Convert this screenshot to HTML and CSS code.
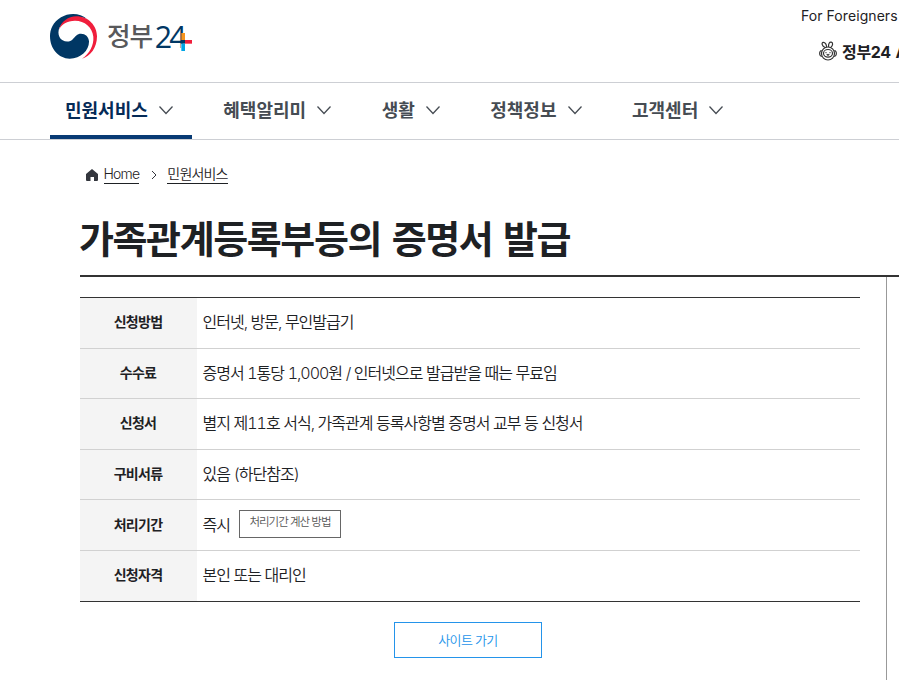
FILE: index.html
```html
<!DOCTYPE html>
<html lang="ko">
<head>
    <meta charset="UTF-8">
    <meta name="viewport" content="width=device-width, initial-scale=1.0">
    <title>가족관계등록부등의 증명서 발급</title>
    <link rel="stylesheet" href="styles.css">
</head>
<body>

    <!-- Header -->
    <header class="header">
        <a class="logo">
            <svg width="144" height="48" viewBox="30 39 432 144">
                <path fill="#003764" d="M140 56C122 39 86 37 63 52C39 67 30 88 30 109C30 146 56 176 89 176C123 176 148 151 147 124C146 110 136 101 123 101C111 101 106 109 99 117C91 126 78 127 68 121C55 113 52 96 59 82C70 60 103 43 140 56Z"/>
                <path fill="#f01e3c" d="M57 89C63 65 85 49 109 49C146 49 171 78 171 109C171 144 151 169 126 176C149 160 162 136 160 110C157 81 134 62 105 62C81 62 65 73 57 89Z"/>
                <text class="logo-ko" x="201" y="139">정부</text>
                <text class="logo-num" x="344" y="144">2</text>
                <text class="logo-num" x="388" y="144">4</text>
                <rect fill="#fff" x="436" y="116" width="20" height="16"/>
                <rect fill="#fff" x="422" y="131" width="16" height="24"/>
                <rect fill="#f7941d" x="424" y="99" width="11" height="21"/>
                <rect fill="#003764" x="424" y="120" width="11" height="11"/>
                <rect fill="#f01e3c" x="435" y="120" width="21" height="11"/>
                <rect fill="#00a5e5" x="424" y="131" width="11" height="22"/>
            </svg>
        </a>
        <div class="util">
            <a class="foreign">For Foreigners</a>
            <a class="app">
                <svg width="20" height="20" viewBox="0 0 20 20" fill="none" stroke="#333" stroke-width="1.2">
                    <circle cx="10" cy="12.5" r="6.5"/>
                    <ellipse cx="10" cy="12.3" rx="4.5" ry="3.8"/>
                    <path d="M7 6.5C3.5 4.5 3.5 1.6 5.2 1.4C7.2 1.2 8.4 3.5 8.6 6M10.6 6C10.2 2.8 11.5 .8 13.3 1.2C15.4 1.8 14.8 4.8 12.8 6.4M3.6 9.5C1 9.5 1 15.5 3.8 15.3M16.4 9.5C19 9.5 19 15.5 16.2 15.3M8.7 13.2L10 14.2L11.3 13.2M7.5 11.6H8.5M11.5 11.6H12.5"/>
                </svg>
                <span>정부24 A</span>
            </a>
        </div>
    </header>

    <!-- Main menu -->
    <nav class="nav">
        <a class="nav-item active">민원서비스<svg class="arrow" viewBox="0 0 20 20"><path d="M3.5 6.5L10 13.5L16.5 6.5"/></svg></a>
        <a class="nav-item">혜택알리미<svg class="arrow" viewBox="0 0 20 20"><path d="M3.5 6.5L10 13.5L16.5 6.5"/></svg></a>
        <a class="nav-item">생활<svg class="arrow" viewBox="0 0 20 20"><path d="M3.5 6.5L10 13.5L16.5 6.5"/></svg></a>
        <a class="nav-item">정책정보<svg class="arrow" viewBox="0 0 20 20"><path d="M3.5 6.5L10 13.5L16.5 6.5"/></svg></a>
        <a class="nav-item">고객센터<svg class="arrow" viewBox="0 0 20 20"><path d="M3.5 6.5L10 13.5L16.5 6.5"/></svg></a>
    </nav>

    <!-- Content -->
    <main class="container">
        <div class="breadcrumb">
            <svg class="house" width="12" height="12" viewBox="0 0 12 12"><path fill="#33363d" d="M6 0L12 5V11Q12 12 11 12H8V8H4.5V12H1Q0 12 0 11V5Z"/></svg>
            <a class="home">Home</a>
            <svg class="sep" width="6" height="8" viewBox="0 0 6 8"><path fill="none" stroke="#33363d" d="M1 0L5 4L1 8"/></svg>
            <a>민원서비스</a>
        </div>

        <h1>가족관계등록부등의 증명서 발급</h1>

        <div class="body">
            <section class="content">
                <table class="info">
                    <tr><th>신청방법</th><td>인터넷, 방문, 무인발급기</td></tr>
                    <tr><th>수수료</th><td>증명서 1통당 1,000원 / 인터넷으로 발급받을 때는 무료임</td></tr>
                    <tr><th>신청서</th><td>별지 제11호 서식, 가족관계 등록사항별 증명서 교부 등 신청서</td></tr>
                    <tr><th>구비서류</th><td>있음 (하단참조)</td></tr>
                    <tr><th>처리기간</th><td><div class="period">즉시<button class="btn-calc">처리기간 계산 방법</button></div></td></tr>
                    <tr><th>신청자격</th><td>본인 또는 대리인</td></tr>
                </table>
                <button class="btn-site">사이트 가기</button>
            </section>
            <aside class="side"></aside>
        </div>
    </main>

</body>
</html>
```
FILE: styles.css
```css
* {
    box-sizing: border-box;
}

body {
    margin: 0;
    height: 680px;
    overflow: hidden;
    background-color: #fff;
    color: #1e2124;
    font-family: Inter, "Noto Sans CJK KR", sans-serif;
    font-size: 16px;
}

button {
    font-family: inherit;
    background-color: #fff;
    padding: 0;
}

/* Header */
.header {
    display: flex;
    height: 83px;
    padding: 13px 0 0 50px;
    border-bottom: 1px solid #cdcfd4;
}

.logo {
    width: 751px;
    flex-shrink: 0;
}

.logo-ko {
    font-family: "Noto Sans CJK KR", sans-serif;
    font-size: 77px;
    font-weight: 500;
    letter-spacing: -3px;
    fill: #58595b;
}

.logo-num {
    font-family: "Open Sans", sans-serif;
    font-size: 91px;
    font-weight: 500;
    fill: #003764;
}

.util {
    width: 98px;
    white-space: nowrap;
}

.foreign {
    display: block;
    margin-top: -7px;
    font-size: 14px;
    line-height: 20px;
    letter-spacing: 0.07px;
}

.app {
    display: flex;
    align-items: center;
    gap: 4px;
    height: 24px;
    margin: 13px 0 0 17px;
    font-weight: 700;
    font-size: 16px;
    letter-spacing: -0.3px;
    word-spacing: 1px;
}

.app svg {
    flex-shrink: 0;
}

/* Main menu */
.nav {
    display: flex;
    gap: 16.5px;
    height: 57px;
    padding-left: 50px;
    border-bottom: 1px solid #cdcfd4;
}

.nav-item {
    display: flex;
    align-items: center;
    gap: 8px;
    padding: 0 16px 1px 15px;
    border-bottom: 4px solid transparent;
    color: #464c53;
    font-size: 18px;
    font-weight: 700;
}

.nav-item.active {
    color: #052b57;
    border-color: #083a74;
}

.arrow {
    width: 20px;
    height: 20px;
    margin-top: 2px;
    fill: none;
    stroke: #464c53;
    stroke-width: 1.3;
}

/* Content */
.container {
    width: 1180px;
    padding-left: 80px;
}

.breadcrumb {
    display: flex;
    align-items: center;
    height: 68px;
    padding-left: 6px;
    font-size: 14px;
    font-weight: 350;
    letter-spacing: -0.8px;
}

.breadcrumb a {
    height: 19px;
    line-height: 17px;
    border-bottom: 1px solid #1e2124;
}

.breadcrumb .house {
    margin-top: 2px;
}

.breadcrumb .home {
    margin-left: 5.5px;
}

.breadcrumb .sep {
    margin: 2px 10px 0 12px;
}

h1 {
    height: 69px;
    margin: 0;
    border-bottom: 2px solid #333;
    font-size: 38px;
    line-height: 62px;
    letter-spacing: -1.4px;
    word-spacing: 3px;
    text-indent: -1px;
}

.body {
    display: flex;
    height: 403px;
}

.content {
    width: 780px;
    padding-top: 20px;
}

.side {
    margin-left: 26px;
    border-left: 1px solid #999;
}

.info {
    width: 100%;
    border-spacing: 0;
    border-top: 1px solid #333;
}

.info th,
.info td {
    height: 50.6px;
    padding: 0 0 3px;
    border-bottom: 1px solid #d1d1d1;
}

.info th {
    width: 117px;
    padding-right: 1px;
    background-color: #f4f4f4;
    font-size: 14px;
    letter-spacing: -0.7px;
}

.info td {
    padding-left: 5.5px;
    font-weight: 350;
    font-variant-numeric: tabular-nums;
    letter-spacing: -1px;
    word-spacing: 0.3px;
}

.info tr:last-child th,
.info tr:last-child td {
    border-bottom-color: #333;
}

.period {
    display: flex;
    align-items: center;
}

.btn-calc {
    width: 102px;
    height: 28px;
    margin-left: 9px;
    padding-bottom: 5px;
    border: 1px solid #666;
    color: #555;
    font-size: 11.5px;
    font-weight: 350;
    letter-spacing: -1px;
}

.btn-site {
    display: block;
    width: 148px;
    height: 36px;
    margin: 20px 0 0 314px;
    padding-bottom: 1px;
    border: 1px solid #2494ea;
    color: #2494ea;
    font-size: 13px;
    font-weight: 350;
    letter-spacing: -0.7px;
}
```
